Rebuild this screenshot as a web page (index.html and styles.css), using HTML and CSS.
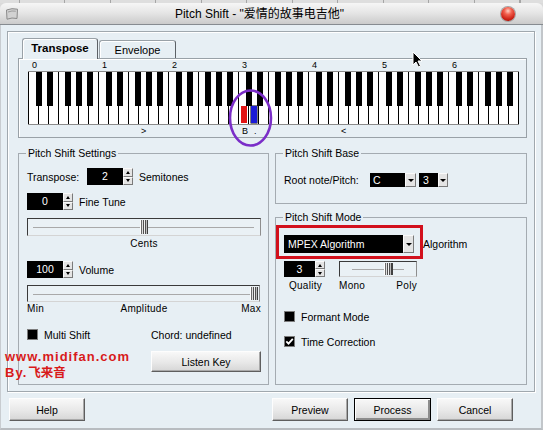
FILE: index.html
```html
<!DOCTYPE html>
<html>
<head>
<meta charset="utf-8">
<title>Pitch Shift</title>
<link rel="stylesheet" href="styles.css">
</head>
<body>
<div class="window">
  <div class="backdrop"></div>
  <div class="titlebar">
    <div class="iconbox">
      <svg class="appicon" width="14" height="14" viewBox="0 0 14 14"><path d="M1.5 3 Q7 0.8 12.5 2.2 L12 11.5 Q7 10.2 2 12.2 Z" fill="#d2d2d2" stroke="#8a8a8a" stroke-width="1"/><path d="M3 5 Q7 3.4 10.8 4.2" stroke="#9c9c9c" fill="none" stroke-width="1"/></svg>
    </div>
    <div class="title">Pitch Shift - "爱情的故事电吉他"</div>
    <div class="closebox"><span class="closebtn"></span></div>
  </div>
  <div class="client">
    <div class="frame">
      <div class="tabs">
        <div class="tab active">Transpose</div>
        <div class="tab">Envelope</div>
      </div>
      <div class="tabpage">
        <div class="octaves"><span>0</span><span>1</span><span>2</span><span>3</span><span>4</span><span>5</span><span>6</span></div>
        <div class="keys">
          <i class="mark red"></i>
          <i class="mark blue"></i>
        </div>
        <div class="keynotes">
          <span class="kn kn-up">&gt;</span>
          <span class="kn kn-b">B</span>
          <span class="kn kn-dot">.</span>
          <span class="kn kn-down">&lt;</span>
        </div>
      </div>
      <div class="groups">
        <div class="group settings">
          <div class="legend">Pitch Shift Settings</div>
          <div class="row r-transpose">
            <span class="lbl-transpose">Transpose:</span>
            <span class="spin"><span class="spin-val">2</span><span class="spin-btns"><i class="up"></i><i class="down"></i></span></span>
            <span class="after">Semitones</span>
          </div>
          <div class="row r-fine">
            <span class="spin"><span class="spin-val">0</span><span class="spin-btns"><i class="up"></i><i class="down"></i></span></span>
            <span class="after">Fine Tune</span>
          </div>
          <div class="slider s-cents"><span class="track"></span><span class="thumb"></span></div>
          <div class="caption c-center">Cents</div>
          <div class="row r-vol">
            <span class="spin"><span class="spin-val">100</span><span class="spin-btns"><i class="up"></i><i class="down"></i></span></span>
            <span class="after">Volume</span>
          </div>
          <div class="slider s-vol"><span class="track"></span><span class="thumb"></span></div>
          <div class="caption c-three"><span>Min</span><span>Amplitude</span><span class="c-max">Max</span></div>
          <div class="opts">
            <span class="check"><i class="cb"></i><span class="cb-lbl">Multi Shift</span></span>
            <span class="chord">Chord: undefined</span>
            <span></span>
            <button class="btn listen">Listen Key</button>
          </div>
        </div>
        <div class="rightcol">
          <div class="group base">
            <div class="legend">Pitch Shift Base</div>
            <div class="row r-root">
              <span class="lbl-root">Root note/Pitch:</span>
              <span class="combo c-note"><span class="combo-val">C</span><span class="dd"></span></span>
              <span class="combo c-oct"><span class="combo-val">3</span><span class="dd"></span></span>
            </div>
          </div>
          <div class="group mode">
            <div class="legend">Pitch Shift Mode</div>
            <div class="row r-alg">
              <span class="combo c-alg"><span class="combo-val">MPEX Algorithm</span><span class="dd"></span></span>
              <span class="after-alg">Algorithm</span>
            </div>
            <div class="row r-quality">
              <span class="spin spin-q"><span class="spin-val">3</span><span class="spin-btns"><i class="up"></i><i class="down"></i></span></span>
              <div class="slider s-mp"><span class="track"></span><span class="thumb"></span></div>
            </div>
            <div class="caption q-labels">
              <span class="q-quality">Quality</span>
              <span class="q-mp"><span>Mono</span><span>Poly</span></span>
            </div>
            <div class="row r-formant">
              <span class="check"><i class="cb"></i><span class="cb-lbl">Formant Mode</span></span>
            </div>
            <div class="row r-time">
              <span class="check"><i class="cb checked"><svg width="9" height="9" viewBox="0 0 9 9"><path d="M1.3 4.4 L3.5 6.6 L7.8 1.8" stroke="#fff" stroke-width="1.8" fill="none"/></svg></i><span class="cb-lbl">Time Correction</span></span>
            </div>
          </div>
        </div>
      </div>
    </div>
    <div class="buttons">
      <button class="btn">Help</button>
      <button class="btn preview">Preview</button>
      <button class="btn default">Process</button>
      <button class="btn">Cancel</button>
    </div>
  </div>

  <svg class="annot ellipse" width="50" height="62" viewBox="0 0 50 62"><ellipse cx="24.5" cy="30" rx="20.5" ry="27.5" fill="none" stroke="#7b2ec8" stroke-width="2.6"/></svg>
  <div class="annot redbox"></div>
  <svg class="annot cursor" width="11" height="17" viewBox="0 0 11 17"><path d="M1 1 L1 14 L4 11 L6.5 16 L8.5 15 L6 10 L10 10 Z" fill="#000" stroke="#fff" stroke-width="1" stroke-linejoin="round"/></svg>
  <div class="annot watermark">
    <div>www.midifan.com</div>
    <div>By.<span class="wm-cjk">飞来音</span></div>
  </div>
</div>
</body>
</html>
```
FILE: styles.css
```css
* { box-sizing: border-box; }
html, body { margin: 0; padding: 0; }
body {
  width: 543px;
  height: 430px;
  overflow: hidden;
  background: #dadada;
  font-family: "Liberation Sans", Arial, sans-serif;
  font-size: 10.5px;
  color: #000;
}
.window {
  position: relative;
  width: 543px;
  height: 430px;
  background: #dadada;
}
.backdrop {
  height: 3px;
  background: repeating-linear-gradient(to right, #dedede 0 19px, #a6a6a6 19px 20px, #dedede 20px 45.5px);
}

/* title bar */
.titlebar {
  display: flex;
  align-items: center;
  height: 22px;
  background: linear-gradient(#f6f6f6, #e6e6e6 45%, #cbcbcb);
  border-bottom: 1px solid #868b90;
  border-radius: 6px 6px 0 0;
}
.iconbox { width: 24px; padding-left: 5px; display: flex; align-items: center; }
.appicon { display: block; }
.title {
  flex: 1;
  text-align: center;
  font-family: "Liberation Sans", "Noto Sans CJK SC", sans-serif;
  font-size: 12px;
  line-height: 14px;
}
.closebox { width: 48px; padding-left: 6px; display: flex; align-items: center; }
.closebtn {
  display: block;
  width: 14px;
  height: 14px;
  border-radius: 50%;
  background: radial-gradient(circle at 50% 28%, #ffd0c4 0, #f2604e 30%, #cc2216 68%, #8a0e08 100%);
  box-shadow: 0 0 0 1px #a4a4a4;
}

/* client area */
.client {
  height: 405px;
  background: #e7eff4;
  border-left: 1px solid #c8ccd0;
  border-right: 2px solid #c2c6ca;
  border-bottom: 2px solid #b8bcc0;
  padding: 6px 0 0 6px;
}
.frame {
  width: 528px;
  height: 361px;
  border: 1px solid #a0a8ae;
  box-shadow: inset 1px 1px 0 #fff, 1px 1px 0 #fff;
  padding: 6px 7px 6px 10px;
}

/* tabs */
.tabs {
  display: flex;
  align-items: flex-end;
  height: 20px;
  margin-left: 4px;
}
.tab {
  height: 18px;
  width: 77px;
  border: 1px solid #99a1a7;
  border-bottom: none;
  border-right-color: #5c6166;
  border-radius: 3px 3px 0 0;
  box-shadow: inset 1px 1px 0 #fff;
  display: flex;
  align-items: center;
  justify-content: center;
  font-size: 11px;
}
.tab.active {
  position: relative;
  z-index: 1;
  height: 21px;
  width: 76px;
  margin-right: 1px;
  margin-bottom: -1px;
  background: #e7eff4;
  font-weight: bold;
  font-size: 11.5px;
  padding-bottom: 2px;
}

/* tab page with keyboard */
.tabpage {
  height: 80px;
  border: 1px solid #99a1a7;
  box-shadow: inset 1px 1px 0 #fff;
}
.octaves {
  display: flex;
  margin-left: 9px;
  height: 12px;
  line-height: 12px;
  font-size: 9px;
}
.octaves span { width: 70px; padding-left: 4px; }
.keys {
  position: relative;
  margin-left: 9px;
  width: 491px;
  height: 54px;
  border-top: 1px solid #8c8c8c;
  border-bottom: 1px solid #8c8c8c;
  background:
    linear-gradient(to right, transparent 8px, #000 8px 14px, transparent 14px 19px, #000 19px 25px, transparent 25px 37px, #000 37px 43px, transparent 43px 48px, #000 48px 54px, transparent 54px 59px, #000 59px 65px, transparent 65px) 0 0 / 70px 34px repeat-x,
    repeating-linear-gradient(to right, #000 0 1px, #fff 1px 10px);
}
.mark {
  position: absolute;
  top: 34px;
  width: 6px;
  height: 17px;
}
.mark.red { left: 213px; background: #e21414; }
.mark.blue { left: 223px; background: #1a1ad6; box-shadow: 0 0 0 0.5px #000; }
.keynotes {
  position: relative;
  height: 12px;
  font-size: 9px;
  line-height: 12px;
}
.kn { position: absolute; top: 0; }
.kn-up { left: 122px; }
.kn-b { left: 223px; }
.kn-dot { left: 235px; }
.kn-down { left: 322px; }

/* group boxes */
.groups {
  display: flex;
  gap: 6px;
  margin-top: 15px;
  height: 232px;
}
.group {
  padding: 0 7px 0 8px;
  border: 1px solid #a4abb1;
}
.legend {
  display: table;
  margin: -7px 0 0 -1px;
  padding: 0 2px;
  height: 13px;
  line-height: 13px;
  background: #e7eff4;
}
.settings { width: 251px; height: 232px; flex: none; }
.rightcol { width: 252px; height: 232px; display: flex; flex-direction: column; flex: none; }
.base { height: 51px; flex: none; }
.mode { height: 168px; flex: none; margin-top: 13px; }

.row { display: flex; align-items: center; }

/* spin boxes */
.spin { display: flex; height: 17px; }
.spin-val {
  width: 36px;
  background: #000;
  color: #fff;
  text-align: center;
  line-height: 17px;
}
.spin-btns { width: 10px; display: flex; flex-direction: column; }
.spin-btns i {
  flex: 1;
  display: flex;
  align-items: center;
  justify-content: center;
  background: #e4e4e4;
  border: 1px solid;
  border-color: #fafafa #7a7a7a #7a7a7a #fafafa;
}
.spin-btns i::after { content: ""; width: 0; height: 0; border-left: 2.5px solid transparent; border-right: 2.5px solid transparent; }
.spin-btns .up::after { border-bottom: 3px solid #000; }
.spin-btns .down::after { border-top: 3px solid #000; }

.r-transpose { margin-top: 8px; height: 17px; }
.lbl-transpose { width: 60px; }
.after { margin-left: 6px; }
.r-fine { margin-top: 8px; height: 17px; }
.r-vol { margin-top: 11px; height: 17px; }

/* sliders */
.slider {
  position: relative;
  height: 18px;
  border: 1px solid;
  border-color: #3a3a3a #8e8e8e #d4d4d4 #3a3a3a;
  background: #eaf1f5;
}
.track {
  position: absolute;
  left: 5px;
  right: 6px;
  top: 50%;
  height: 1px;
  background: #a9a9a9;
}
.thumb {
  position: absolute;
  top: 1px;
  bottom: 1px;
  width: 8px;
  background: linear-gradient(to right, #fff 0 1px, #6a6a6a 1px 2px, #e0e0e0 2px 3px, #505050 3px 4px, #f0f0f0 4px 5px, #505050 5px 6px, #bdbdbd 6px 7px, #404040 7px 8px);
}
.s-cents { margin-top: 8px; width: 234px; }
.s-cents .thumb { left: calc(50% - 4px); }
.s-vol { margin-top: 7px; width: 233px; height: 17px; }
.s-vol .thumb { right: 1px; }

.caption {
  font-size: 10px;
  letter-spacing: 0.3px;
  line-height: 12px;
  height: 12px;
}
.c-center { margin-top: 2px; width: 234px; text-align: center; }
.c-three {
  margin-top: 1px;
  width: 234px;
  display: grid;
  grid-template-columns: 1fr auto 1fr;
}
.c-max { justify-self: end; }

/* options */
.opts {
  margin-top: 13px;
  display: grid;
  grid-template-columns: 124px 110px;
  grid-template-rows: 13px 21px;
  row-gap: 10px;
  align-items: center;
}
.check { display: flex; align-items: center; }
.cb {
  display: flex;
  align-items: center;
  justify-content: center;
  width: 11px;
  height: 11px;
  background: #000;
  border: 1px solid #7c7c7c;
}
.cb svg { display: block; }
.cb-lbl { margin-left: 6px; }

/* buttons */
.btn {
  font-family: "Liberation Sans", Arial, sans-serif;
  font-size: 10.5px;
  color: #000;
  height: 23px;
  width: 76px;
  padding: 0;
  background: linear-gradient(#f8f8f8, #e8e8e8 55%, #d6d6d6);
  border: 1px solid;
  border-color: #fdfdfd #5e5e5e #5e5e5e #fdfdfd;
  box-shadow: inset -1px -1px 0 #a9a9a9;
}
.btn.listen { width: 110px; height: 21px; }
.btn.default {
  width: 77px;
  border-color: #000;
  box-shadow: inset 1px 1px 0 #fff, inset -2px -2px 0 #8c8c8c;
}
.buttons {
  display: flex;
  gap: 6px;
  margin: 6px 28px 0 2px;
}
.btn.preview { margin-left: auto; }

/* base group */
.r-root { margin-top: 13px; height: 14px; }
.lbl-root { width: 86px; }
.combo { display: flex; height: 14px; }
.combo-val {
  background: #000;
  color: #fff;
  line-height: 14px;
  padding-left: 3px;
  white-space: nowrap;
}
.dd {
  width: 11px;
  display: flex;
  align-items: center;
  justify-content: center;
  background: #e4e4e4;
  border: 1px solid;
  border-color: #fafafa #7a7a7a #7a7a7a #fafafa;
}
.dd::after { content: ""; width: 0; height: 0; border-left: 3px solid transparent; border-right: 3px solid transparent; border-top: 3px solid #000; }
.c-note .combo-val { width: 35px; }
.c-oct { margin-left: 3px; }
.c-oct .combo-val { width: 19px; padding-left: 4px; }
.c-oct .dd { width: 10px; }

/* mode group */
.r-alg { margin-top: 11px; height: 18px; }
.c-alg { height: 18px; }
.c-alg .combo-val { width: 119px; line-height: 18px; padding-left: 4px; }
.c-alg .dd { width: 11px; }
.after-alg { margin-left: 9px; }
.r-quality { margin-top: 8px; height: 16px; }
.spin-q { height: 16px; }
.spin-q .spin-val { width: 31px; line-height: 16px; }
.s-mp { margin-left: 14px; width: 78px; height: 16px; }
.s-mp .thumb { left: 44px; width: 9px; }
.s-mp .track { left: 12px; right: 12px; }
.q-labels { display: flex; margin-top: 3px; }
.q-quality { width: 41px; text-align: center; padding-left: 2px; }
.q-mp { margin-left: 14px; width: 78px; display: flex; justify-content: space-between; }
.r-formant { margin-top: 18px; height: 13px; }
.r-time { margin-top: 12px; height: 13px; }

/* annotations on top of the screenshot */
.annot { position: absolute; }
.ellipse { left: 226px; top: 88px; }
.redbox {
  left: 276px;
  top: 225px;
  width: 147px;
  height: 34px;
  border: 3px solid #d2101c;
}
.cursor { left: 412px; top: 51px; }
.watermark {
  left: 5px;
  top: 349px;
  color: #d81a1a;
  font-family: "Liberation Sans", "Noto Sans CJK SC", sans-serif;
  font-weight: bold;
  font-size: 13px;
  line-height: 16px;
  letter-spacing: 1px;
}
.wm-cjk { letter-spacing: 0; font-size: 12.5px; margin-left: 1px; }
```
